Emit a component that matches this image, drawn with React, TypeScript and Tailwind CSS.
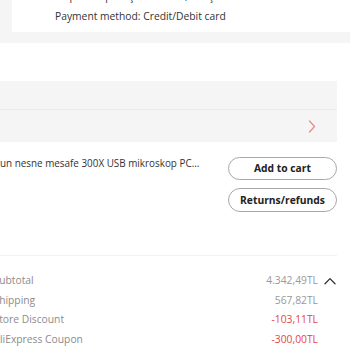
import React from "react";

const ChevronRight = () => (
  <svg width="8" height="13" viewBox="0 0 8 13" fill="none">
    <path d="M1.5 1 L6.5 6.5 L1.5 12" stroke="#ec8a8a" strokeWidth="1.3" strokeLinecap="round" strokeLinejoin="round" />
  </svg>
);

const ChevronUp = () => (
  <svg width="12" height="8" viewBox="0 0 12 8" fill="none">
    <path d="M1 6.8 L6 1.6 L11 6.8" stroke="#333" strokeWidth="1.3" strokeLinecap="round" strokeLinejoin="round" />
  </svg>
);

type Row = { label: string; value: string; red?: boolean; chevron?: boolean };

const rows: Row[] = [
  { label: "Subtotal", value: "4.342,49TL", chevron: true },
  { label: "Shipping", value: "567,82TL" },
  { label: "Store Discount", value: "-103,11TL", red: true },
  { label: "AliExpress Coupon", value: "-300,00TL", red: true },
];

export default function App() {
  return (
    <div
      className="w-[350px] h-[350px] overflow-hidden bg-white text-[10.3px] text-[#333]"
      style={{ fontFamily: '"Open Sans", "Noto Sans", sans-serif' }}
    >
      <div className="bg-[#f5f5f5] pl-[12px] pb-[11px]">
        <div className="bg-white h-[32px] overflow-hidden pl-[43px]">
          <div className="-mt-[14px] leading-[20px] whitespace-nowrap">
            Ship to: Tepebaşı Mahallesi, Eskişehir
          </div>
          <div className="leading-[20px] whitespace-nowrap">Payment method: Credit/Debit card</div>
        </div>
      </div>

      <div className="pt-[38px]">
        <div className="w-[337px] bg-[#f5f5f5]">
          <div className="h-[29px] border-b border-[#ebebeb]" />
          <div className="h-[32px] flex items-center justify-end pr-[21px]">
            <ChevronRight />
          </div>
        </div>

        <div className="mt-[15px] w-[337px] flex">
          <div className="flex-1 min-w-0 overflow-hidden">
            <div className="leading-[13px] whitespace-nowrap text-[9.9px]">
              un nesne mesafe 300X USB mikroskop PC...
            </div>
          </div>
          <div className="w-[109px] flex flex-col gap-[8px]">
            <button className="h-[23px] rounded-full border border-[#a8a8a8] bg-white font-bold text-[#222] leading-none">
              Add to cart
            </button>
            <button className="h-[24px] rounded-full border border-[#a8a8a8] bg-white font-bold text-[#222] leading-none">
              Returns/refunds
            </button>
          </div>
        </div>

        <div className="mt-[43px] w-[337px] h-px bg-[#f2f2f2]" />

        <div className="pt-[15px] w-[337px]">
          {rows.map((r) => (
            <div key={r.label} className="flex items-center justify-between leading-[19.5px] h-[19.5px]">
              <span className="-ml-[6.5px] whitespace-nowrap text-[#8c8c8c]">{r.label}</span>
              <div className="flex items-center">
                <span className={r.red ? "text-[#e4473d]" : "text-[#999]"}>{r.value}</span>
                <div className="w-[19px] flex justify-end pr-[1px]">
                  {r.chevron ? <ChevronUp /> : null}
                </div>
              </div>
            </div>
          ))}
        </div>
      </div>
    </div>
  );
}
